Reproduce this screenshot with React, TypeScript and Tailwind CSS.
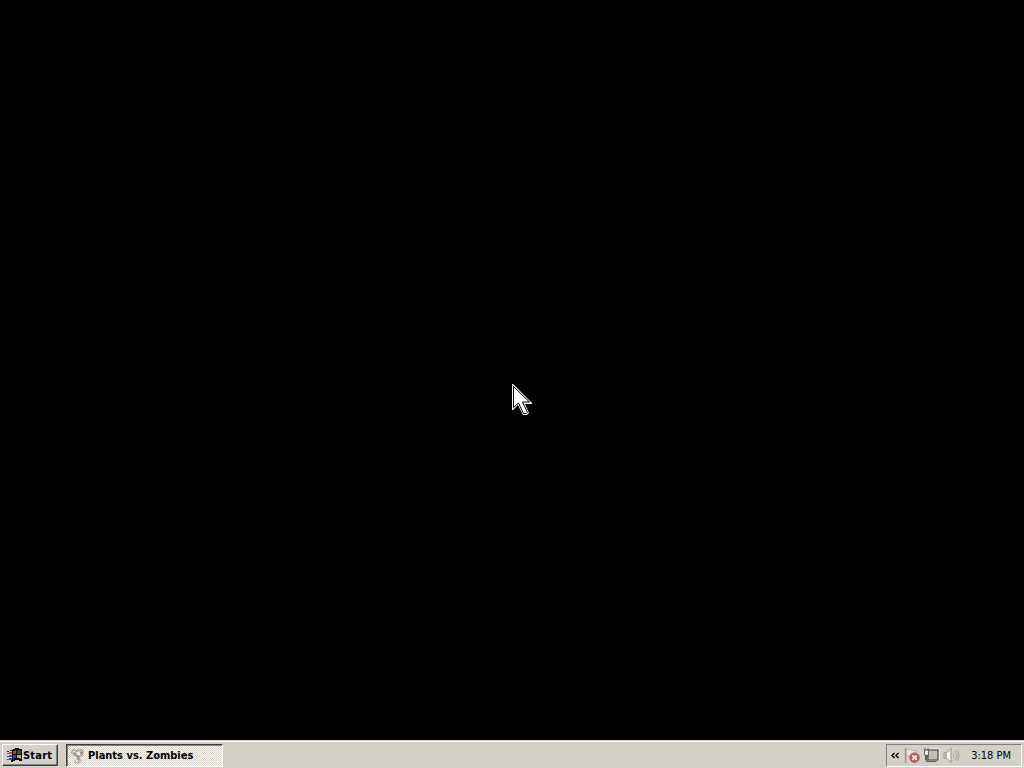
import { useState } from "react";

function WindowsLogo() {
  return (
    <svg width="17" height="16" viewBox="0 0 17 16" shapeRendering="crispEdges" className="shrink-0">
      <path d="M7 2h2V1h4v1h3v12h-3v-1H9v1H7v1H5v-2h1V3h1z" fill="#080808" />
      <path d="M1 4h2v1H1zM4 3h2v1H4z" fill="#302020" />
      <path d="M1 6h2v1H1zM3 5h3v2H3z" fill="#c05060" />
      <path d="M1 9h2v1H1zM3 8h3v2H3zM1 12h2v1H1zM3 11h3v2H3z" fill="#3d4fae" />
      <path d="M7 4h2V3h1v4H7z" fill="#b9432f" />
      <path d="M12 3h2v1h1v3h-4V4h1z" fill="#305c38" />
      <path d="M7 8h3v3H8v1H7z" fill="#3440b4" />
      <path d="M11 8h4v4h-1v-1h-3z" fill="#c5b04a" />
    </svg>
  );
}

function GameIcon() {
  return (
    <svg width="16" height="16" viewBox="0 0 16 16" className="shrink-0">
      <path d="M1 4 3 1l4 1 4-2 3 3-1 5-3 1 2 4-3 3-5-1-1-2 3-2-1-3-4-2z" fill="#cbc4bc" />
      <path d="M1 5 3 2l3 1M6 4l2-2 4 0 1 3-2 3-3 1M3 8l3-1 3 3-1 4-3 1" fill="none" stroke="#a89f95" strokeWidth="1.2" />
      <path d="M3 5l3 1M10 4l2 2M7 7l2 5" stroke="#8b8279" strokeWidth="1.3" />
      <path d="M7 4h3v3H7zM3 3h2v1H3zM4 8h2v2H4zM6 12h2v2H6z" fill="#eee9e3" />
    </svg>
  );
}

function SecurityIcon() {
  return (
    <svg width="16" height="16" viewBox="0 0 16 16">
      <path d="M1.5 0v15" stroke="#98948f" strokeWidth="1.4" />
      <path d="M2.5 1.5h4l2 1h4v7H8L7 8H2.5z" fill="#e5e2dd" stroke="#b5b0aa" />
      <circle cx="10.5" cy="9.7" r="4.8" fill="#cc4e4b" stroke="#b86c67" />
      <path d="m8.3 7.5 4.4 4.4m0-4.4-4.4 4.4" stroke="#fff" strokeWidth="1.8" />
    </svg>
  );
}

function NetworkIcon() {
  return (
    <svg width="17" height="16" viewBox="0 0 17 16">
      <path d="M5 2h10v10H5z" fill="#c1beb8" stroke="#f5f3ef" strokeWidth="3" />
      <path d="M5 2h10v10H5z" fill="#c1beb8" stroke="#6b6762" strokeWidth="1.6" />
      <path d="M1.5 2h4v5h-1v5h-2V7h-1z" fill="#efece6" stroke="#6b6762" />
      <path d="M2 0v3M5 0v3M3.5 7v6.5h10" fill="none" stroke="#5d5954" />
    </svg>
  );
}

function VolumeIcon() {
  return (
    <svg width="17" height="16" viewBox="0 0 17 16">
      <path d="M1 4.5h3l4-4v14l-4-4H1z" fill="#f4f2ee" stroke="#96918b" />
      <path d="M1 4.5h3v6H1z" fill="#b7b2ac" />
      <path d="M10 5q3 2.5 0 5M12 3q4 4.5 0 9M14 2q4 5.5 0 11" fill="none" stroke="#a39f99" />
    </svg>
  );
}

function Cursor() {
  return (
    <svg width="21" height="32" viewBox="0 0 21 32" className="absolute left-[512px] top-[384px]">
      <path d="M0 0v26h1l5-5 5 10h4l2-2-4-9h7v-1L1 0z" fill="#fff" />
      <path d="M1.5 2.5v21L6.5 19l5 10.5h3l1-1-5-10.5h7z" fill="#fff" stroke="#000" strokeWidth="1" />
    </svg>
  );
}

export default function App() {
  const [started, setStarted] = useState(false);
  const [active, setActive] = useState(true);

  return (
    <div className="relative flex h-screen w-full flex-col overflow-hidden bg-black font-['DejaVu_Sans_Condensed','DejaVu_Sans',sans-serif] text-[11px] text-black">
      <main className="flex-1 cursor-none">
        <Cursor />
      </main>

      {/* Taskbar */}
      <footer className="flex h-7 shrink-0 items-start border-t border-[#d4d0c8] bg-[#d4d0c8] pt-[3px] pr-[2px] pl-[2px] shadow-[inset_0_1px_0_#fff]">
        <button
          onClick={() => setStarted(!started)}
          aria-pressed={started}
          className="flex h-[22px] w-[56px] shrink-0 items-center border border-t-white border-r-[#404040] border-b-[#404040] border-l-white bg-[#d4d0c8] pl-[3px] font-bold shadow-[inset_-1px_-1px_0_#808080]"
        >
          <WindowsLogo />
          <span className="pt-[2px] tracking-[0.2px]">Start</span>
        </button>

        <button
          onClick={() => setActive(!active)}
          aria-pressed={active}
          className="ml-2 flex h-[23px] w-[157px] shrink-0 items-center border border-t-[#404040] border-r-white border-b-white border-l-[#404040] bg-[#d4d0c8] bg-[conic-gradient(#fff_25%,#d4d0c8_0_50%,#fff_0_75%,#d4d0c8_0)] bg-[length:2px_2px] pt-px pl-[3px] font-bold shadow-[inset_1px_1px_0_#808080]"
        >
          <GameIcon />
          <span className="ml-[2px] whitespace-nowrap pt-px">Plants vs. Zombies</span>
        </button>

        {/* Notification area */}
        <div className="ml-auto flex h-[23px] w-[136px] items-center border border-t-[#808080] border-r-white border-b-white border-l-[#808080] pl-1">
          <svg width="9" height="7" viewBox="0 0 9 7" className="mr-1">
            <path d="M3.5 1 1 3.5 3.5 6M7.5 1 5 3.5 7.5 6" fill="none" stroke="#000" strokeWidth="1.4" />
          </svg>
          <div className="flex items-center gap-[3px]">
            <SecurityIcon />
            <NetworkIcon />
            <VolumeIcon />
          </div>
          <time className="ml-auto mr-[10px] whitespace-nowrap pt-[2px] tracking-[0px]">3:18 PM</time>
        </div>
      </footer>
    </div>
  );
}
